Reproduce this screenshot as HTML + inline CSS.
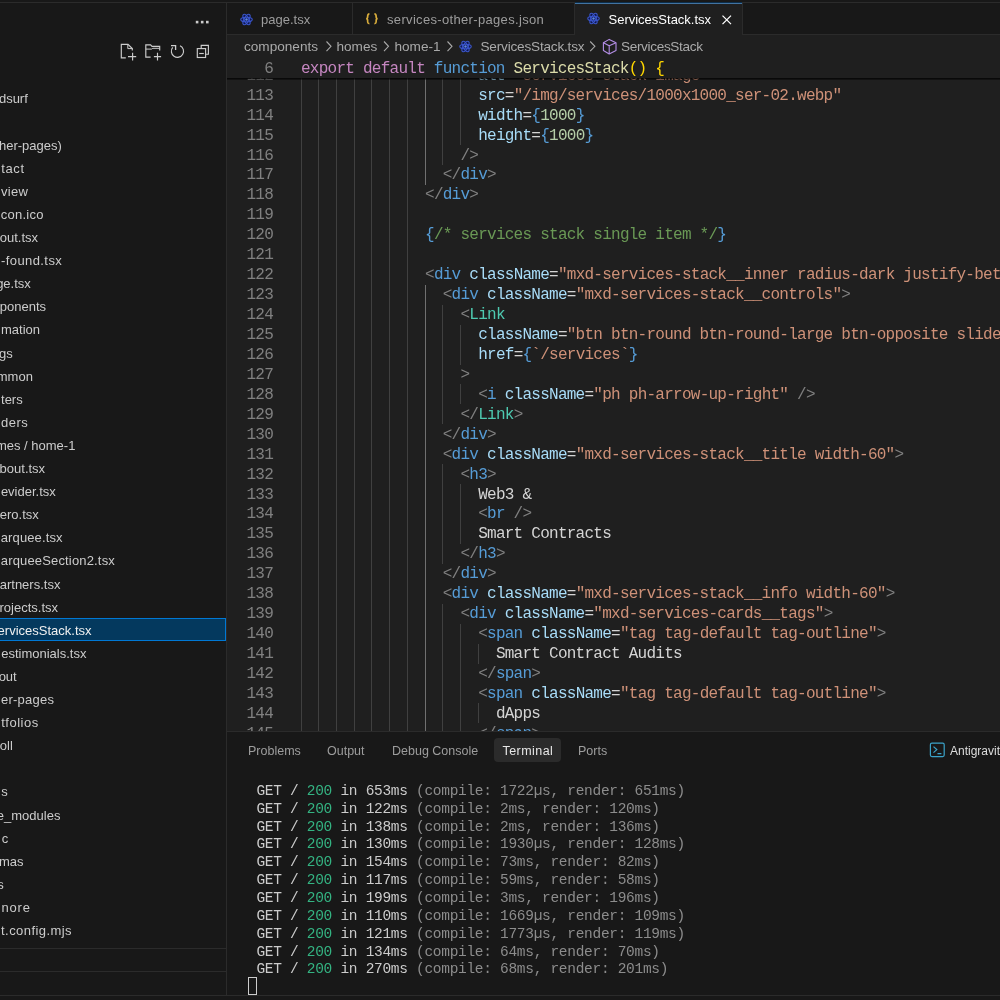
<!DOCTYPE html>
<html><head><meta charset="utf-8"><style>
*{margin:0;padding:0;box-sizing:border-box}
html,body{width:1000px;height:1000px;overflow:hidden;background:#181818;font-family:"Liberation Sans",sans-serif}
.a{position:absolute}
.g{position:absolute;width:1px;height:19.94px}
.cl{position:absolute;white-space:pre;font-family:"Liberation Mono",monospace;font-size:16px;letter-spacing:-0.7446px;line-height:20px;height:20px}
.ln{position:absolute;right:727px;margin-top:0px;white-space:pre;font-family:"Liberation Mono",monospace;font-size:16px;letter-spacing:-0.75px;line-height:20px;color:#808080;text-align:right}
.sr{position:absolute;white-space:pre;font-size:13px;line-height:23px;color:#cccccc}
.tl{position:absolute;left:248px;white-space:pre;font-family:"Liberation Mono",monospace;font-size:14.5px;letter-spacing:-0.3px;line-height:17.82px;color:#cccccc}
.tab{position:absolute;top:4px;height:31.5px;font-size:13px;line-height:31px;white-space:pre;color:#9d9d9d}
.bc{position:absolute;top:34.5px;font-size:13.6px;line-height:23px;white-space:pre;color:#a9a9a9}
.pt{position:absolute;top:739px;font-size:12.5px;line-height:24px;white-space:pre;color:#9d9d9d}
</style></head><body><div id="root" style="position:absolute;left:0;top:0;width:1000px;height:1000px;will-change:transform">
<!-- title border -->
<div class="a" style="left:0;top:2px;width:1000px;height:1px;background:#2b2b2b"></div>
<!-- sidebar -->
<div class="a" style="left:0;top:3px;width:226px;height:992px;background:#181818;overflow:hidden">
</div>

<div class="a" style="left:0;top:618px;width:226px;height:23px;background:#04395e;border:1px solid #0078d4;border-left:none"></div>
<div class="a" style="left:0;top:60px;width:226px;height:888px;overflow:hidden">
<div class="a" style="left:0;top:-60px;width:226px;height:1000px">
<div class="sr" style="top:87.40px;right:198.20px">dsurf</div><div class="sr" style="top:133.60px;right:164.20px">her-pages)</div><div class="sr" style="top:156.70px;right:201.39px;letter-spacing:0.607px">tact</div><div class="sr" style="top:179.80px;right:197.91px;letter-spacing:0.295px">view</div><div class="sr" style="top:202.90px;right:182.37px;letter-spacing:0.229px">con.ico</div><div class="sr" style="top:226.00px;right:188.00px">out.tsx</div><div class="sr" style="top:249.10px;right:163.79px;letter-spacing:0.411px">-found.tsx</div><div class="sr" style="top:272.20px;right:195.20px">ge.tsx</div><div class="sr" style="top:295.30px;right:179.90px">ponents</div><div class="sr" style="top:318.40px;right:186.00px">mation</div><div class="sr" style="top:341.50px;right:213.20px">gs</div><div class="sr" style="top:364.60px;right:193.10px">mmon</div><div class="sr" style="top:387.70px;right:203.30px">ters</div><div class="sr" style="top:410.80px;right:197.73px;letter-spacing:0.475px">ders</div><div class="sr" style="top:433.90px;right:150.60px">mes / home-1</div><div class="sr" style="top:457.00px;right:180.90px">bout.tsx</div><div class="sr" style="top:480.10px;right:170.20px">evider.tsx</div><div class="sr" style="top:503.20px;right:187.20px">ero.tsx</div><div class="sr" style="top:526.30px;right:163.27px;letter-spacing:0.130px">arquee.tsx</div><div class="sr" style="top:549.40px;right:111.04px;letter-spacing:0.161px">arqueeSection2.tsx</div><div class="sr" style="top:572.50px;right:165.60px">artners.tsx</div><div class="sr" style="top:595.60px;right:168.00px">rojects.tsx</div><div class="sr" style="top:618.70px;right:134.50px;color:#f0f0f0">ervicesStack.tsx</div><div class="sr" style="top:641.80px;right:139.60px">estimonials.tsx</div><div class="sr" style="top:664.90px;right:209.30px">out</div><div class="sr" style="top:688.00px;right:171.63px;letter-spacing:0.274px">er-pages</div><div class="sr" style="top:711.10px;right:187.17px;letter-spacing:0.533px">tfolios</div><div class="sr" style="top:734.20px;right:213.20px">oll</div><div class="sr" style="top:780.40px;right:218.30px">s</div><div class="sr" style="top:803.50px;right:165.60px">e_modules</div><div class="sr" style="top:826.60px;right:216.70px;letter-spacing:1.100px">c</div><div class="sr" style="top:849.70px;right:202.50px">mas</div><div class="sr" style="top:872.80px;right:222.30px">s</div><div class="sr" style="top:895.90px;right:195.28px;letter-spacing:0.817px">nore</div><div class="sr" style="top:919.00px;right:154.07px;letter-spacing:0.429px">t.config.mjs</div><div class="sr" style="top:942.10px;right:191.40px">next-env.d.ts</div>
</div></div>
<div class="a" style="left:0;top:948px;width:226px;height:1px;background:#2b2b2b"></div>
<div class="a" style="left:0;top:971px;width:226px;height:1px;background:#2b2b2b"></div>
<div class="a" style="left:226px;top:3px;width:1px;height:992px;background:#2b2b2b"></div>
<!-- editor -->
<div class="a" style="left:227px;top:34px;width:773px;height:697px;background:#1f1f1f"></div>
<div class="a" style="left:227px;top:34px;width:773px;height:1px;background:#2b2b2b"></div>
<div class="a" style="left:352px;top:3px;width:1px;height:31px;background:#2b2b2b"></div>
<div class="a" style="left:574px;top:3px;width:1px;height:31px;background:#2b2b2b"></div>
<div class="a" style="left:742px;top:3px;width:1px;height:31px;background:#2b2b2b"></div>
<div class="a" style="left:575px;top:3px;width:167px;height:32px;background:#1f1f1f"></div>
<div class="a" style="left:575px;top:2px;width:167px;height:1px;background:#0c2d4a"></div><div class="a" style="left:575px;top:3px;width:167px;height:1px;background:#4273a0"></div>
<svg width="13" height="13" viewBox="0 0 24 24" style="position:absolute;left:239.6px;top:12.6px"><circle cx="12" cy="12" r="9" fill="#0e1650"/><g fill="none" stroke="#3a56cc" stroke-width="2.0"><ellipse cx="12" cy="12" rx="10.6" ry="4.3"/><ellipse cx="12" cy="12" rx="10.6" ry="4.3" transform="rotate(60 12 12)"/><ellipse cx="12" cy="12" rx="10.6" ry="4.3" transform="rotate(120 12 12)"/></g><circle cx="12" cy="12" r="2.3" fill="#6088e0"/></svg>
<div class="tab" style="left:261px">page.tsx</div>

<div class="tab" style="left:387px;letter-spacing:0.33px">services-other-pages.json</div>
<svg width="13" height="13" viewBox="0 0 24 24" style="position:absolute;left:586.5px;top:12.4px"><circle cx="12" cy="12" r="9" fill="#0e1650"/><g fill="none" stroke="#3a56cc" stroke-width="2.0"><ellipse cx="12" cy="12" rx="10.6" ry="4.3"/><ellipse cx="12" cy="12" rx="10.6" ry="4.3" transform="rotate(60 12 12)"/><ellipse cx="12" cy="12" rx="10.6" ry="4.3" transform="rotate(120 12 12)"/></g><circle cx="12" cy="12" r="2.3" fill="#6088e0"/></svg>
<div class="tab" style="left:608.5px;color:#ffffff">ServicesStack.tsx</div>

<!-- breadcrumbs -->
<div class="bc" style="left:244px">components</div>
<div class="bc" style="left:336.5px">homes</div>
<div class="bc" style="left:394.5px">home-1</div>
<div class="bc" style="left:480.5px;letter-spacing:-0.2px">ServicesStack.tsx</div>
<div class="bc" style="left:621px;letter-spacing:-0.35px">ServicesStack</div>
<svg width="13" height="13" viewBox="0 0 24 24" style="position:absolute;left:459px;top:39.7px"><circle cx="12" cy="12" r="9" fill="#0e1650"/><g fill="none" stroke="#3a56cc" stroke-width="2.0"><ellipse cx="12" cy="12" rx="10.6" ry="4.3"/><ellipse cx="12" cy="12" rx="10.6" ry="4.3" transform="rotate(60 12 12)"/><ellipse cx="12" cy="12" rx="10.6" ry="4.3" transform="rotate(120 12 12)"/></g><circle cx="12" cy="12" r="2.3" fill="#6088e0"/></svg>
<!-- code -->
<div class="a" style="left:227px;top:58px;width:773px;height:673px;overflow:hidden">
<div class="a" style="left:-227px;top:-58px;width:1000px;height:1000px">
<div class="g" style="left:301px;top:65.41px;background:#404040"></div><div class="g" style="left:318px;top:65.41px;background:#404040"></div><div class="g" style="left:336px;top:65.41px;background:#404040"></div><div class="g" style="left:354px;top:65.41px;background:#404040"></div><div class="g" style="left:371px;top:65.41px;background:#404040"></div><div class="g" style="left:389px;top:65.41px;background:#404040"></div><div class="g" style="left:407px;top:65.41px;background:#404040"></div><div class="g" style="left:425px;top:65.41px;background:#707070"></div><div class="g" style="left:442px;top:65.41px;background:#404040"></div><div class="g" style="left:460px;top:65.41px;background:#404040"></div><div class="g" style="left:301px;top:85.35px;background:#404040"></div><div class="g" style="left:318px;top:85.35px;background:#404040"></div><div class="g" style="left:336px;top:85.35px;background:#404040"></div><div class="g" style="left:354px;top:85.35px;background:#404040"></div><div class="g" style="left:371px;top:85.35px;background:#404040"></div><div class="g" style="left:389px;top:85.35px;background:#404040"></div><div class="g" style="left:407px;top:85.35px;background:#404040"></div><div class="g" style="left:425px;top:85.35px;background:#707070"></div><div class="g" style="left:442px;top:85.35px;background:#404040"></div><div class="g" style="left:460px;top:85.35px;background:#404040"></div><div class="g" style="left:301px;top:105.29px;background:#404040"></div><div class="g" style="left:318px;top:105.29px;background:#404040"></div><div class="g" style="left:336px;top:105.29px;background:#404040"></div><div class="g" style="left:354px;top:105.29px;background:#404040"></div><div class="g" style="left:371px;top:105.29px;background:#404040"></div><div class="g" style="left:389px;top:105.29px;background:#404040"></div><div class="g" style="left:407px;top:105.29px;background:#404040"></div><div class="g" style="left:425px;top:105.29px;background:#707070"></div><div class="g" style="left:442px;top:105.29px;background:#404040"></div><div class="g" style="left:460px;top:105.29px;background:#404040"></div><div class="g" style="left:301px;top:125.23px;background:#404040"></div><div class="g" style="left:318px;top:125.23px;background:#404040"></div><div class="g" style="left:336px;top:125.23px;background:#404040"></div><div class="g" style="left:354px;top:125.23px;background:#404040"></div><div class="g" style="left:371px;top:125.23px;background:#404040"></div><div class="g" style="left:389px;top:125.23px;background:#404040"></div><div class="g" style="left:407px;top:125.23px;background:#404040"></div><div class="g" style="left:425px;top:125.23px;background:#707070"></div><div class="g" style="left:442px;top:125.23px;background:#404040"></div><div class="g" style="left:460px;top:125.23px;background:#404040"></div><div class="g" style="left:301px;top:145.17px;background:#404040"></div><div class="g" style="left:318px;top:145.17px;background:#404040"></div><div class="g" style="left:336px;top:145.17px;background:#404040"></div><div class="g" style="left:354px;top:145.17px;background:#404040"></div><div class="g" style="left:371px;top:145.17px;background:#404040"></div><div class="g" style="left:389px;top:145.17px;background:#404040"></div><div class="g" style="left:407px;top:145.17px;background:#404040"></div><div class="g" style="left:425px;top:145.17px;background:#707070"></div><div class="g" style="left:442px;top:145.17px;background:#404040"></div><div class="g" style="left:301px;top:165.11px;background:#404040"></div><div class="g" style="left:318px;top:165.11px;background:#404040"></div><div class="g" style="left:336px;top:165.11px;background:#404040"></div><div class="g" style="left:354px;top:165.11px;background:#404040"></div><div class="g" style="left:371px;top:165.11px;background:#404040"></div><div class="g" style="left:389px;top:165.11px;background:#404040"></div><div class="g" style="left:407px;top:165.11px;background:#404040"></div><div class="g" style="left:425px;top:165.11px;background:#707070"></div><div class="g" style="left:301px;top:185.05px;background:#404040"></div><div class="g" style="left:318px;top:185.05px;background:#404040"></div><div class="g" style="left:336px;top:185.05px;background:#404040"></div><div class="g" style="left:354px;top:185.05px;background:#404040"></div><div class="g" style="left:371px;top:185.05px;background:#404040"></div><div class="g" style="left:389px;top:185.05px;background:#404040"></div><div class="g" style="left:407px;top:185.05px;background:#404040"></div><div class="g" style="left:301px;top:204.99px;background:#404040"></div><div class="g" style="left:318px;top:204.99px;background:#404040"></div><div class="g" style="left:336px;top:204.99px;background:#404040"></div><div class="g" style="left:354px;top:204.99px;background:#404040"></div><div class="g" style="left:371px;top:204.99px;background:#404040"></div><div class="g" style="left:389px;top:204.99px;background:#404040"></div><div class="g" style="left:407px;top:204.99px;background:#404040"></div><div class="g" style="left:301px;top:224.93px;background:#404040"></div><div class="g" style="left:318px;top:224.93px;background:#404040"></div><div class="g" style="left:336px;top:224.93px;background:#404040"></div><div class="g" style="left:354px;top:224.93px;background:#404040"></div><div class="g" style="left:371px;top:224.93px;background:#404040"></div><div class="g" style="left:389px;top:224.93px;background:#404040"></div><div class="g" style="left:407px;top:224.93px;background:#404040"></div><div class="g" style="left:301px;top:244.87px;background:#404040"></div><div class="g" style="left:318px;top:244.87px;background:#404040"></div><div class="g" style="left:336px;top:244.87px;background:#404040"></div><div class="g" style="left:354px;top:244.87px;background:#404040"></div><div class="g" style="left:371px;top:244.87px;background:#404040"></div><div class="g" style="left:389px;top:244.87px;background:#404040"></div><div class="g" style="left:407px;top:244.87px;background:#404040"></div><div class="g" style="left:301px;top:264.81px;background:#404040"></div><div class="g" style="left:318px;top:264.81px;background:#404040"></div><div class="g" style="left:336px;top:264.81px;background:#404040"></div><div class="g" style="left:354px;top:264.81px;background:#404040"></div><div class="g" style="left:371px;top:264.81px;background:#404040"></div><div class="g" style="left:389px;top:264.81px;background:#404040"></div><div class="g" style="left:407px;top:264.81px;background:#404040"></div><div class="g" style="left:301px;top:284.75px;background:#404040"></div><div class="g" style="left:318px;top:284.75px;background:#404040"></div><div class="g" style="left:336px;top:284.75px;background:#404040"></div><div class="g" style="left:354px;top:284.75px;background:#404040"></div><div class="g" style="left:371px;top:284.75px;background:#404040"></div><div class="g" style="left:389px;top:284.75px;background:#404040"></div><div class="g" style="left:407px;top:284.75px;background:#404040"></div><div class="g" style="left:425px;top:284.75px;background:#707070"></div><div class="g" style="left:301px;top:304.69px;background:#404040"></div><div class="g" style="left:318px;top:304.69px;background:#404040"></div><div class="g" style="left:336px;top:304.69px;background:#404040"></div><div class="g" style="left:354px;top:304.69px;background:#404040"></div><div class="g" style="left:371px;top:304.69px;background:#404040"></div><div class="g" style="left:389px;top:304.69px;background:#404040"></div><div class="g" style="left:407px;top:304.69px;background:#404040"></div><div class="g" style="left:425px;top:304.69px;background:#707070"></div><div class="g" style="left:442px;top:304.69px;background:#404040"></div><div class="g" style="left:301px;top:324.63px;background:#404040"></div><div class="g" style="left:318px;top:324.63px;background:#404040"></div><div class="g" style="left:336px;top:324.63px;background:#404040"></div><div class="g" style="left:354px;top:324.63px;background:#404040"></div><div class="g" style="left:371px;top:324.63px;background:#404040"></div><div class="g" style="left:389px;top:324.63px;background:#404040"></div><div class="g" style="left:407px;top:324.63px;background:#404040"></div><div class="g" style="left:425px;top:324.63px;background:#707070"></div><div class="g" style="left:442px;top:324.63px;background:#404040"></div><div class="g" style="left:460px;top:324.63px;background:#404040"></div><div class="g" style="left:301px;top:344.57px;background:#404040"></div><div class="g" style="left:318px;top:344.57px;background:#404040"></div><div class="g" style="left:336px;top:344.57px;background:#404040"></div><div class="g" style="left:354px;top:344.57px;background:#404040"></div><div class="g" style="left:371px;top:344.57px;background:#404040"></div><div class="g" style="left:389px;top:344.57px;background:#404040"></div><div class="g" style="left:407px;top:344.57px;background:#404040"></div><div class="g" style="left:425px;top:344.57px;background:#707070"></div><div class="g" style="left:442px;top:344.57px;background:#404040"></div><div class="g" style="left:460px;top:344.57px;background:#404040"></div><div class="g" style="left:301px;top:364.51px;background:#404040"></div><div class="g" style="left:318px;top:364.51px;background:#404040"></div><div class="g" style="left:336px;top:364.51px;background:#404040"></div><div class="g" style="left:354px;top:364.51px;background:#404040"></div><div class="g" style="left:371px;top:364.51px;background:#404040"></div><div class="g" style="left:389px;top:364.51px;background:#404040"></div><div class="g" style="left:407px;top:364.51px;background:#404040"></div><div class="g" style="left:425px;top:364.51px;background:#707070"></div><div class="g" style="left:442px;top:364.51px;background:#404040"></div><div class="g" style="left:301px;top:384.45px;background:#404040"></div><div class="g" style="left:318px;top:384.45px;background:#404040"></div><div class="g" style="left:336px;top:384.45px;background:#404040"></div><div class="g" style="left:354px;top:384.45px;background:#404040"></div><div class="g" style="left:371px;top:384.45px;background:#404040"></div><div class="g" style="left:389px;top:384.45px;background:#404040"></div><div class="g" style="left:407px;top:384.45px;background:#404040"></div><div class="g" style="left:425px;top:384.45px;background:#707070"></div><div class="g" style="left:442px;top:384.45px;background:#404040"></div><div class="g" style="left:460px;top:384.45px;background:#404040"></div><div class="g" style="left:301px;top:404.39px;background:#404040"></div><div class="g" style="left:318px;top:404.39px;background:#404040"></div><div class="g" style="left:336px;top:404.39px;background:#404040"></div><div class="g" style="left:354px;top:404.39px;background:#404040"></div><div class="g" style="left:371px;top:404.39px;background:#404040"></div><div class="g" style="left:389px;top:404.39px;background:#404040"></div><div class="g" style="left:407px;top:404.39px;background:#404040"></div><div class="g" style="left:425px;top:404.39px;background:#707070"></div><div class="g" style="left:442px;top:404.39px;background:#404040"></div><div class="g" style="left:301px;top:424.33px;background:#404040"></div><div class="g" style="left:318px;top:424.33px;background:#404040"></div><div class="g" style="left:336px;top:424.33px;background:#404040"></div><div class="g" style="left:354px;top:424.33px;background:#404040"></div><div class="g" style="left:371px;top:424.33px;background:#404040"></div><div class="g" style="left:389px;top:424.33px;background:#404040"></div><div class="g" style="left:407px;top:424.33px;background:#404040"></div><div class="g" style="left:425px;top:424.33px;background:#707070"></div><div class="g" style="left:301px;top:444.27px;background:#404040"></div><div class="g" style="left:318px;top:444.27px;background:#404040"></div><div class="g" style="left:336px;top:444.27px;background:#404040"></div><div class="g" style="left:354px;top:444.27px;background:#404040"></div><div class="g" style="left:371px;top:444.27px;background:#404040"></div><div class="g" style="left:389px;top:444.27px;background:#404040"></div><div class="g" style="left:407px;top:444.27px;background:#404040"></div><div class="g" style="left:425px;top:444.27px;background:#707070"></div><div class="g" style="left:301px;top:464.21px;background:#404040"></div><div class="g" style="left:318px;top:464.21px;background:#404040"></div><div class="g" style="left:336px;top:464.21px;background:#404040"></div><div class="g" style="left:354px;top:464.21px;background:#404040"></div><div class="g" style="left:371px;top:464.21px;background:#404040"></div><div class="g" style="left:389px;top:464.21px;background:#404040"></div><div class="g" style="left:407px;top:464.21px;background:#404040"></div><div class="g" style="left:425px;top:464.21px;background:#707070"></div><div class="g" style="left:442px;top:464.21px;background:#404040"></div><div class="g" style="left:301px;top:484.15px;background:#404040"></div><div class="g" style="left:318px;top:484.15px;background:#404040"></div><div class="g" style="left:336px;top:484.15px;background:#404040"></div><div class="g" style="left:354px;top:484.15px;background:#404040"></div><div class="g" style="left:371px;top:484.15px;background:#404040"></div><div class="g" style="left:389px;top:484.15px;background:#404040"></div><div class="g" style="left:407px;top:484.15px;background:#404040"></div><div class="g" style="left:425px;top:484.15px;background:#707070"></div><div class="g" style="left:442px;top:484.15px;background:#404040"></div><div class="g" style="left:460px;top:484.15px;background:#404040"></div><div class="g" style="left:301px;top:504.09px;background:#404040"></div><div class="g" style="left:318px;top:504.09px;background:#404040"></div><div class="g" style="left:336px;top:504.09px;background:#404040"></div><div class="g" style="left:354px;top:504.09px;background:#404040"></div><div class="g" style="left:371px;top:504.09px;background:#404040"></div><div class="g" style="left:389px;top:504.09px;background:#404040"></div><div class="g" style="left:407px;top:504.09px;background:#404040"></div><div class="g" style="left:425px;top:504.09px;background:#707070"></div><div class="g" style="left:442px;top:504.09px;background:#404040"></div><div class="g" style="left:460px;top:504.09px;background:#404040"></div><div class="g" style="left:301px;top:524.03px;background:#404040"></div><div class="g" style="left:318px;top:524.03px;background:#404040"></div><div class="g" style="left:336px;top:524.03px;background:#404040"></div><div class="g" style="left:354px;top:524.03px;background:#404040"></div><div class="g" style="left:371px;top:524.03px;background:#404040"></div><div class="g" style="left:389px;top:524.03px;background:#404040"></div><div class="g" style="left:407px;top:524.03px;background:#404040"></div><div class="g" style="left:425px;top:524.03px;background:#707070"></div><div class="g" style="left:442px;top:524.03px;background:#404040"></div><div class="g" style="left:460px;top:524.03px;background:#404040"></div><div class="g" style="left:301px;top:543.97px;background:#404040"></div><div class="g" style="left:318px;top:543.97px;background:#404040"></div><div class="g" style="left:336px;top:543.97px;background:#404040"></div><div class="g" style="left:354px;top:543.97px;background:#404040"></div><div class="g" style="left:371px;top:543.97px;background:#404040"></div><div class="g" style="left:389px;top:543.97px;background:#404040"></div><div class="g" style="left:407px;top:543.97px;background:#404040"></div><div class="g" style="left:425px;top:543.97px;background:#707070"></div><div class="g" style="left:442px;top:543.97px;background:#404040"></div><div class="g" style="left:301px;top:563.91px;background:#404040"></div><div class="g" style="left:318px;top:563.91px;background:#404040"></div><div class="g" style="left:336px;top:563.91px;background:#404040"></div><div class="g" style="left:354px;top:563.91px;background:#404040"></div><div class="g" style="left:371px;top:563.91px;background:#404040"></div><div class="g" style="left:389px;top:563.91px;background:#404040"></div><div class="g" style="left:407px;top:563.91px;background:#404040"></div><div class="g" style="left:425px;top:563.91px;background:#707070"></div><div class="g" style="left:301px;top:583.85px;background:#404040"></div><div class="g" style="left:318px;top:583.85px;background:#404040"></div><div class="g" style="left:336px;top:583.85px;background:#404040"></div><div class="g" style="left:354px;top:583.85px;background:#404040"></div><div class="g" style="left:371px;top:583.85px;background:#404040"></div><div class="g" style="left:389px;top:583.85px;background:#404040"></div><div class="g" style="left:407px;top:583.85px;background:#404040"></div><div class="g" style="left:425px;top:583.85px;background:#707070"></div><div class="g" style="left:301px;top:603.79px;background:#404040"></div><div class="g" style="left:318px;top:603.79px;background:#404040"></div><div class="g" style="left:336px;top:603.79px;background:#404040"></div><div class="g" style="left:354px;top:603.79px;background:#404040"></div><div class="g" style="left:371px;top:603.79px;background:#404040"></div><div class="g" style="left:389px;top:603.79px;background:#404040"></div><div class="g" style="left:407px;top:603.79px;background:#404040"></div><div class="g" style="left:425px;top:603.79px;background:#707070"></div><div class="g" style="left:442px;top:603.79px;background:#404040"></div><div class="g" style="left:301px;top:623.73px;background:#404040"></div><div class="g" style="left:318px;top:623.73px;background:#404040"></div><div class="g" style="left:336px;top:623.73px;background:#404040"></div><div class="g" style="left:354px;top:623.73px;background:#404040"></div><div class="g" style="left:371px;top:623.73px;background:#404040"></div><div class="g" style="left:389px;top:623.73px;background:#404040"></div><div class="g" style="left:407px;top:623.73px;background:#404040"></div><div class="g" style="left:425px;top:623.73px;background:#707070"></div><div class="g" style="left:442px;top:623.73px;background:#404040"></div><div class="g" style="left:460px;top:623.73px;background:#404040"></div><div class="g" style="left:301px;top:643.67px;background:#404040"></div><div class="g" style="left:318px;top:643.67px;background:#404040"></div><div class="g" style="left:336px;top:643.67px;background:#404040"></div><div class="g" style="left:354px;top:643.67px;background:#404040"></div><div class="g" style="left:371px;top:643.67px;background:#404040"></div><div class="g" style="left:389px;top:643.67px;background:#404040"></div><div class="g" style="left:407px;top:643.67px;background:#404040"></div><div class="g" style="left:425px;top:643.67px;background:#707070"></div><div class="g" style="left:442px;top:643.67px;background:#404040"></div><div class="g" style="left:460px;top:643.67px;background:#404040"></div><div class="g" style="left:478px;top:643.67px;background:#404040"></div><div class="g" style="left:301px;top:663.61px;background:#404040"></div><div class="g" style="left:318px;top:663.61px;background:#404040"></div><div class="g" style="left:336px;top:663.61px;background:#404040"></div><div class="g" style="left:354px;top:663.61px;background:#404040"></div><div class="g" style="left:371px;top:663.61px;background:#404040"></div><div class="g" style="left:389px;top:663.61px;background:#404040"></div><div class="g" style="left:407px;top:663.61px;background:#404040"></div><div class="g" style="left:425px;top:663.61px;background:#707070"></div><div class="g" style="left:442px;top:663.61px;background:#404040"></div><div class="g" style="left:460px;top:663.61px;background:#404040"></div><div class="g" style="left:301px;top:683.55px;background:#404040"></div><div class="g" style="left:318px;top:683.55px;background:#404040"></div><div class="g" style="left:336px;top:683.55px;background:#404040"></div><div class="g" style="left:354px;top:683.55px;background:#404040"></div><div class="g" style="left:371px;top:683.55px;background:#404040"></div><div class="g" style="left:389px;top:683.55px;background:#404040"></div><div class="g" style="left:407px;top:683.55px;background:#404040"></div><div class="g" style="left:425px;top:683.55px;background:#707070"></div><div class="g" style="left:442px;top:683.55px;background:#404040"></div><div class="g" style="left:460px;top:683.55px;background:#404040"></div><div class="g" style="left:301px;top:703.49px;background:#404040"></div><div class="g" style="left:318px;top:703.49px;background:#404040"></div><div class="g" style="left:336px;top:703.49px;background:#404040"></div><div class="g" style="left:354px;top:703.49px;background:#404040"></div><div class="g" style="left:371px;top:703.49px;background:#404040"></div><div class="g" style="left:389px;top:703.49px;background:#404040"></div><div class="g" style="left:407px;top:703.49px;background:#404040"></div><div class="g" style="left:425px;top:703.49px;background:#707070"></div><div class="g" style="left:442px;top:703.49px;background:#404040"></div><div class="g" style="left:460px;top:703.49px;background:#404040"></div><div class="g" style="left:478px;top:703.49px;background:#404040"></div><div class="g" style="left:301px;top:723.43px;background:#404040"></div><div class="g" style="left:318px;top:723.43px;background:#404040"></div><div class="g" style="left:336px;top:723.43px;background:#404040"></div><div class="g" style="left:354px;top:723.43px;background:#404040"></div><div class="g" style="left:371px;top:723.43px;background:#404040"></div><div class="g" style="left:389px;top:723.43px;background:#404040"></div><div class="g" style="left:407px;top:723.43px;background:#404040"></div><div class="g" style="left:425px;top:723.43px;background:#707070"></div><div class="g" style="left:442px;top:723.43px;background:#404040"></div><div class="g" style="left:460px;top:723.43px;background:#404040"></div>
<div class="cl" style="top:65.76px;left:478.19px"><span style="color:#a8dcf8">alt</span><span style="color:#d4d4d4">=</span><span style="color:#ce9178">&quot;services stack image&quot;</span></div><div class="cl" style="top:85.70px;left:478.19px"><span style="color:#a8dcf8">src</span><span style="color:#d4d4d4">=</span><span style="color:#ce9178">&quot;/img/services/1000x1000_ser-02.webp&quot;</span></div><div class="cl" style="top:105.64px;left:478.19px"><span style="color:#a8dcf8">width</span><span style="color:#d4d4d4">=</span><span style="color:#569cd6">{</span><span style="color:#b5cea8">1000</span><span style="color:#569cd6">}</span></div><div class="cl" style="top:125.58px;left:478.19px"><span style="color:#a8dcf8">height</span><span style="color:#d4d4d4">=</span><span style="color:#569cd6">{</span><span style="color:#b5cea8">1000</span><span style="color:#569cd6">}</span></div><div class="cl" style="top:145.52px;left:460.48px"><span style="color:#808080">/&gt;</span></div><div class="cl" style="top:165.46px;left:442.76px"><span style="color:#808080">&lt;/</span><span style="color:#569cd6">div</span><span style="color:#808080">&gt;</span></div><div class="cl" style="top:185.40px;left:425.05px"><span style="color:#808080">&lt;/</span><span style="color:#569cd6">div</span><span style="color:#808080">&gt;</span></div><div class="cl" style="top:225.28px;left:425.05px"><span style="color:#569cd6">{</span><span style="color:#6a9955">/* services stack single item */</span><span style="color:#569cd6">}</span></div><div class="cl" style="top:265.16px;left:425.05px"><span style="color:#808080">&lt;</span><span style="color:#569cd6">div</span><span style="color:#d4d4d4"> </span><span style="color:#a8dcf8">className</span><span style="color:#d4d4d4">=</span><span style="color:#ce9178">&quot;mxd-services-stack__inner radius-dark justify-between&quot;</span><span style="color:#808080">&gt;</span></div><div class="cl" style="top:285.10px;left:442.76px"><span style="color:#808080">&lt;</span><span style="color:#569cd6">div</span><span style="color:#d4d4d4"> </span><span style="color:#a8dcf8">className</span><span style="color:#d4d4d4">=</span><span style="color:#ce9178">&quot;mxd-services-stack__controls&quot;</span><span style="color:#808080">&gt;</span></div><div class="cl" style="top:305.04px;left:460.48px"><span style="color:#808080">&lt;</span><span style="color:#4ec9b0">Link</span></div><div class="cl" style="top:324.98px;left:478.19px"><span style="color:#a8dcf8">className</span><span style="color:#d4d4d4">=</span><span style="color:#ce9178">&quot;btn btn-round btn-round-large btn-opposite slide-right-up&quot;</span></div><div class="cl" style="top:344.92px;left:478.19px"><span style="color:#a8dcf8">href</span><span style="color:#d4d4d4">=</span><span style="color:#569cd6">{</span><span style="color:#ce9178">`/services`</span><span style="color:#569cd6">}</span></div><div class="cl" style="top:364.86px;left:460.48px"><span style="color:#808080">&gt;</span></div><div class="cl" style="top:384.80px;left:478.19px"><span style="color:#808080">&lt;</span><span style="color:#569cd6">i</span><span style="color:#d4d4d4"> </span><span style="color:#a8dcf8">className</span><span style="color:#d4d4d4">=</span><span style="color:#ce9178">&quot;ph ph-arrow-up-right&quot;</span><span style="color:#808080"> /&gt;</span></div><div class="cl" style="top:404.74px;left:460.48px"><span style="color:#808080">&lt;/</span><span style="color:#4ec9b0">Link</span><span style="color:#808080">&gt;</span></div><div class="cl" style="top:424.68px;left:442.76px"><span style="color:#808080">&lt;/</span><span style="color:#569cd6">div</span><span style="color:#808080">&gt;</span></div><div class="cl" style="top:444.62px;left:442.76px"><span style="color:#808080">&lt;</span><span style="color:#569cd6">div</span><span style="color:#d4d4d4"> </span><span style="color:#a8dcf8">className</span><span style="color:#d4d4d4">=</span><span style="color:#ce9178">&quot;mxd-services-stack__title width-60&quot;</span><span style="color:#808080">&gt;</span></div><div class="cl" style="top:464.56px;left:460.48px"><span style="color:#808080">&lt;</span><span style="color:#569cd6">h3</span><span style="color:#808080">&gt;</span></div><div class="cl" style="top:484.50px;left:478.19px"><span style="color:#d4d4d4">Web3 &amp;</span></div><div class="cl" style="top:504.44px;left:478.19px"><span style="color:#808080">&lt;</span><span style="color:#569cd6">br</span><span style="color:#808080"> /&gt;</span></div><div class="cl" style="top:524.38px;left:478.19px"><span style="color:#d4d4d4">Smart Contracts</span></div><div class="cl" style="top:544.32px;left:460.48px"><span style="color:#808080">&lt;/</span><span style="color:#569cd6">h3</span><span style="color:#808080">&gt;</span></div><div class="cl" style="top:564.26px;left:442.76px"><span style="color:#808080">&lt;/</span><span style="color:#569cd6">div</span><span style="color:#808080">&gt;</span></div><div class="cl" style="top:584.20px;left:442.76px"><span style="color:#808080">&lt;</span><span style="color:#569cd6">div</span><span style="color:#d4d4d4"> </span><span style="color:#a8dcf8">className</span><span style="color:#d4d4d4">=</span><span style="color:#ce9178">&quot;mxd-services-stack__info width-60&quot;</span><span style="color:#808080">&gt;</span></div><div class="cl" style="top:604.14px;left:460.48px"><span style="color:#808080">&lt;</span><span style="color:#569cd6">div</span><span style="color:#d4d4d4"> </span><span style="color:#a8dcf8">className</span><span style="color:#d4d4d4">=</span><span style="color:#ce9178">&quot;mxd-services-cards__tags&quot;</span><span style="color:#808080">&gt;</span></div><div class="cl" style="top:624.08px;left:478.19px"><span style="color:#808080">&lt;</span><span style="color:#569cd6">span</span><span style="color:#d4d4d4"> </span><span style="color:#a8dcf8">className</span><span style="color:#d4d4d4">=</span><span style="color:#ce9178">&quot;tag tag-default tag-outline&quot;</span><span style="color:#808080">&gt;</span></div><div class="cl" style="top:644.02px;left:495.90px"><span style="color:#d4d4d4">Smart Contract Audits</span></div><div class="cl" style="top:663.96px;left:478.19px"><span style="color:#808080">&lt;/</span><span style="color:#569cd6">span</span><span style="color:#808080">&gt;</span></div><div class="cl" style="top:683.90px;left:478.19px"><span style="color:#808080">&lt;</span><span style="color:#569cd6">span</span><span style="color:#d4d4d4"> </span><span style="color:#a8dcf8">className</span><span style="color:#d4d4d4">=</span><span style="color:#ce9178">&quot;tag tag-default tag-outline&quot;</span><span style="color:#808080">&gt;</span></div><div class="cl" style="top:703.84px;left:495.90px"><span style="color:#d4d4d4">dApps</span></div><div class="cl" style="top:723.78px;left:478.19px"><span style="color:#808080">&lt;/</span><span style="color:#569cd6">span</span><span style="color:#808080">&gt;</span></div>
<div class="ln" style="top:65.76px">112</div><div class="ln" style="top:85.70px">113</div><div class="ln" style="top:105.64px">114</div><div class="ln" style="top:125.58px">115</div><div class="ln" style="top:145.52px">116</div><div class="ln" style="top:165.46px">117</div><div class="ln" style="top:185.40px">118</div><div class="ln" style="top:205.34px">119</div><div class="ln" style="top:225.28px">120</div><div class="ln" style="top:245.22px">121</div><div class="ln" style="top:265.16px">122</div><div class="ln" style="top:285.10px">123</div><div class="ln" style="top:305.04px">124</div><div class="ln" style="top:324.98px">125</div><div class="ln" style="top:344.92px">126</div><div class="ln" style="top:364.86px">127</div><div class="ln" style="top:384.80px">128</div><div class="ln" style="top:404.74px">129</div><div class="ln" style="top:424.68px">130</div><div class="ln" style="top:444.62px">131</div><div class="ln" style="top:464.56px">132</div><div class="ln" style="top:484.50px">133</div><div class="ln" style="top:504.44px">134</div><div class="ln" style="top:524.38px">135</div><div class="ln" style="top:544.32px">136</div><div class="ln" style="top:564.26px">137</div><div class="ln" style="top:584.20px">138</div><div class="ln" style="top:604.14px">139</div><div class="ln" style="top:624.08px">140</div><div class="ln" style="top:644.02px">141</div><div class="ln" style="top:663.96px">142</div><div class="ln" style="top:683.90px">143</div><div class="ln" style="top:703.84px">144</div><div class="ln" style="top:723.78px">145</div>
</div>
<!-- sticky -->
<div class="a" style="left:0;top:0;width:773px;height:20px;background:#1f1f1f"></div><div class="a" style="left:0;top:20px;width:773px;height:2px;background:linear-gradient(rgba(0,0,0,0.85),rgba(0,0,0,0.25))"></div>
<div class="a" style="left:-227px;top:0;width:1000px;height:20px">
<div class="ln" style="top:1.2px">6</div>
<div class="cl" style="top:1.2px;left:301px"><span style="color:#c586c0">export default </span><span style="color:#569cd6">function </span><span style="color:#dcdcaa">ServicesStack</span><span style="color:#ffd700">()</span><span style="color:#d4d4d4"> </span><span style="color:#ffd700">{</span></div>
</div>
</div>
<!-- panel -->
<div class="a" style="left:227px;top:731px;width:773px;height:1px;background:#2b2b2b"></div>
<div class="pt" style="left:248px">Problems</div>
<div class="pt" style="left:327px">Output</div>
<div class="pt" style="left:392px">Debug Console</div>
<div class="a" style="left:494px;top:738px;width:67px;height:24px;background:#2b2b2b;border-radius:4px"></div>
<div class="pt" style="left:502.5px;color:#e7e7e7;letter-spacing:0.45px">Terminal</div>
<div class="pt" style="left:578px">Ports</div>

<div class="pt" style="left:950px;color:#dddddd;font-size:12px">Antigravity</div>
<div class="tl" style="top:782.90px"> GET / <span style="color:#34b382">200</span> in 653ms <span style="color:#8c8c8c">(compile: 1722µs, render: 651ms)</span></div><div class="tl" style="top:800.75px"> GET / <span style="color:#34b382">200</span> in 122ms <span style="color:#8c8c8c">(compile: 2ms, render: 120ms)</span></div><div class="tl" style="top:818.60px"> GET / <span style="color:#34b382">200</span> in 138ms <span style="color:#8c8c8c">(compile: 2ms, render: 136ms)</span></div><div class="tl" style="top:836.45px"> GET / <span style="color:#34b382">200</span> in 130ms <span style="color:#8c8c8c">(compile: 1930µs, render: 128ms)</span></div><div class="tl" style="top:854.30px"> GET / <span style="color:#34b382">200</span> in 154ms <span style="color:#8c8c8c">(compile: 73ms, render: 82ms)</span></div><div class="tl" style="top:872.15px"> GET / <span style="color:#34b382">200</span> in 117ms <span style="color:#8c8c8c">(compile: 59ms, render: 58ms)</span></div><div class="tl" style="top:890.00px"> GET / <span style="color:#34b382">200</span> in 199ms <span style="color:#8c8c8c">(compile: 3ms, render: 196ms)</span></div><div class="tl" style="top:907.85px"> GET / <span style="color:#34b382">200</span> in 110ms <span style="color:#8c8c8c">(compile: 1669µs, render: 109ms)</span></div><div class="tl" style="top:925.70px"> GET / <span style="color:#34b382">200</span> in 121ms <span style="color:#8c8c8c">(compile: 1773µs, render: 119ms)</span></div><div class="tl" style="top:943.55px"> GET / <span style="color:#34b382">200</span> in 134ms <span style="color:#8c8c8c">(compile: 64ms, render: 70ms)</span></div><div class="tl" style="top:961.40px"> GET / <span style="color:#34b382">200</span> in 270ms <span style="color:#8c8c8c">(compile: 68ms, render: 201ms)</span></div>
<div class="a" style="left:248px;top:977px;width:8.5px;height:17.5px;border:1px solid #cccccc"></div>
<svg class="a" style="left:0;top:0" width="1000" height="1000" viewBox="0 0 1000 1000" fill="none">
<g stroke="#cccccc" stroke-width="1.15" stroke-linejoin="miter">
<path d="M125.8 57.8H121.3V44.3H128L132.3 48.6V50.6"/>
<path d="M127.8 44.3V48.6H132.3" stroke-width="1"/>
<path d="M128 56.6H136.2M132.6 52.8V60.4"/>
<path d="M150.6 57.1H145.8V44.8H150.6L152 46.3H159.7V50.6"/>
<path d="M145.8 49.1H151.5L152.8 48.3H159.7" stroke-width="1"/>
<path d="M153.9 56.6H161.1M157.5 52.8V60.4"/>
<path d="M180 45.7A6.1 6.1 0 1 1 172.7 47.4"/>
<path d="M171 45.6H175.6V50" stroke-width="1.3"/>
<path d="M201.2 48V45.4H208.4V54.2H205.8"/>
<rect x="197.3" y="48.6" width="8.3" height="8.9"/>
<path d="M199.2 53.5H203.8"/>
</g>
<g fill="#cccccc"><rect x="195.8" y="20.8" width="2.6" height="2.6"/><rect x="200.9" y="20.8" width="2.6" height="2.6"/><rect x="206" y="20.8" width="2.6" height="2.6"/></g>
<g stroke="#d9ad3c" stroke-width="1.7" fill="none">
<path d="M369.4 13.8C367.6 13.8 367.6 15 367.6 17V17.6C367.6 18.4 367 18.7 366.1 18.7C367 18.7 367.6 19 367.6 19.8V20.6C367.6 22.6 367.6 23.6 369.4 23.6"/>
<path d="M374.4 13.8C376.2 13.8 376.2 15 376.2 17V17.6C376.2 18.4 376.8 18.7 377.7 18.7C376.8 18.7 376.2 19 376.2 19.8V20.6C376.2 22.6 376.2 23.6 374.4 23.6"/>
</g>
<path d="M722.5 15.6L731 24.1M731 15.6L722.5 24.1" stroke="#ffffff" stroke-width="1.25"/>
<g stroke="#a9a9a9" stroke-width="1.1">
<path d="M326.5 41.5L331 46.3L326.5 51.2"/>
<path d="M384 41.5L388.5 46.3L384 51.2"/>
<path d="M447.5 41.5L452 46.3L447.5 51.2"/>
<path d="M590.2 41.5L594.9 46.3L590.2 51.2"/>
</g>
<g stroke="#b48ee6" stroke-width="1.1" stroke-linejoin="round">
<path d="M609.2 39.4L616 42.8V50.6L609.2 53.9L603.4 50.6V42.8Z"/>
<path d="M603.4 42.8L609.2 45.8L616 42.8M609.2 45.8V53.9"/>
</g>
<g stroke="#3ba3c9" stroke-width="1.2" fill="none">
<rect x="930.4" y="743.2" width="13.8" height="13.4" rx="1.5"/>
<path d="M933.5 746.6L936.8 749.6L933.5 752.6M937.5 753.6H941.4"/>
</g>
</svg>
<!-- status -->
<div class="a" style="left:0;top:995px;width:1000px;height:1px;background:#2b2b2b"></div>
</div></body></html>
